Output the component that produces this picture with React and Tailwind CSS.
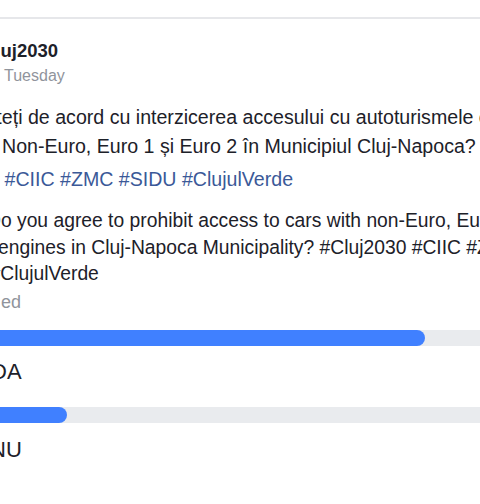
export default function App() {
  return (
    <div
      className="w-[480px] h-[504px] overflow-hidden bg-white text-[#1d2129]"
      style={{ fontFamily: '"Liberation Sans", Arial, sans-serif' }}
    >
      <div className="pt-[17px]">
        <div className="h-[2px] bg-[#e6e7ea]" />
      </div>

      {/* HEADER */}
      <div className="mt-[21px] whitespace-nowrap">
        <div className="ml-[-18px] text-[18.5px] leading-[22px] font-bold">
          Cluj2030
        </div>
        <div className="ml-[4px] mt-[4px] text-[16px] leading-5 text-[#90949c]">
          Tuesday
        </div>
      </div>

      {/* ROMANIAN TEXT */}
      <div className="mt-[17px] text-[19.6px] leading-[29px] whitespace-nowrap">
        <div className="ml-[-38.5px]">
          Sunteți de acord cu interzicerea accesului cu autoturismele cu
        </div>
        <div className="ml-[2px]">
          Non-Euro, Euro 1 și Euro 2 în Municipiul Cluj-Napoca?
        </div>
      </div>
      <div className="mt-[3.5px] ml-[4.5px] text-[19.6px] leading-[29px] whitespace-nowrap text-[#3b5998]">
        #CIIC #ZMC #SIDU #ClujulVerde
      </div>

      {/* ENGLISH TEXT */}
      <div className="mt-[14.5px] text-[19.3px] leading-[26.5px] whitespace-nowrap">
        <div className="ml-[-13px]">
          Do you agree to prohibit access to cars with non-Euro, Euro 1 and Euro 2
        </div>
        <div className="ml-[-2px]">
          engines in Cluj-Napoca Municipality? #Cluj2030 #CIIC #ZMC
        </div>
        <div className="ml-[-10.5px]">#ClujulVerde</div>
      </div>
      <div className="mt-[3px] ml-[1px] text-[18px] leading-[22px] text-[#90949c] whitespace-nowrap">
        ed
      </div>

      {/* POLL */}
      <div className="mt-[17px] ml-[-20px] w-[600px] h-4 rounded-full bg-[#e9ebee]">
        <div className="w-[445px] h-4 rounded-full bg-[#4080ff]" />
      </div>
      <div className="mt-[13.5px] ml-[-9px] text-[22px] leading-[26px]">DA</div>

      <div className="mt-[21.5px] ml-[-20px] w-[600px] h-4 rounded-full bg-[#e9ebee]">
        <div className="w-[87px] h-4 rounded-full bg-[#4080ff]" />
      </div>
      <div className="mt-[14.5px] ml-[-10px] text-[22px] leading-[26px]">NU</div>
    </div>
  );
}
